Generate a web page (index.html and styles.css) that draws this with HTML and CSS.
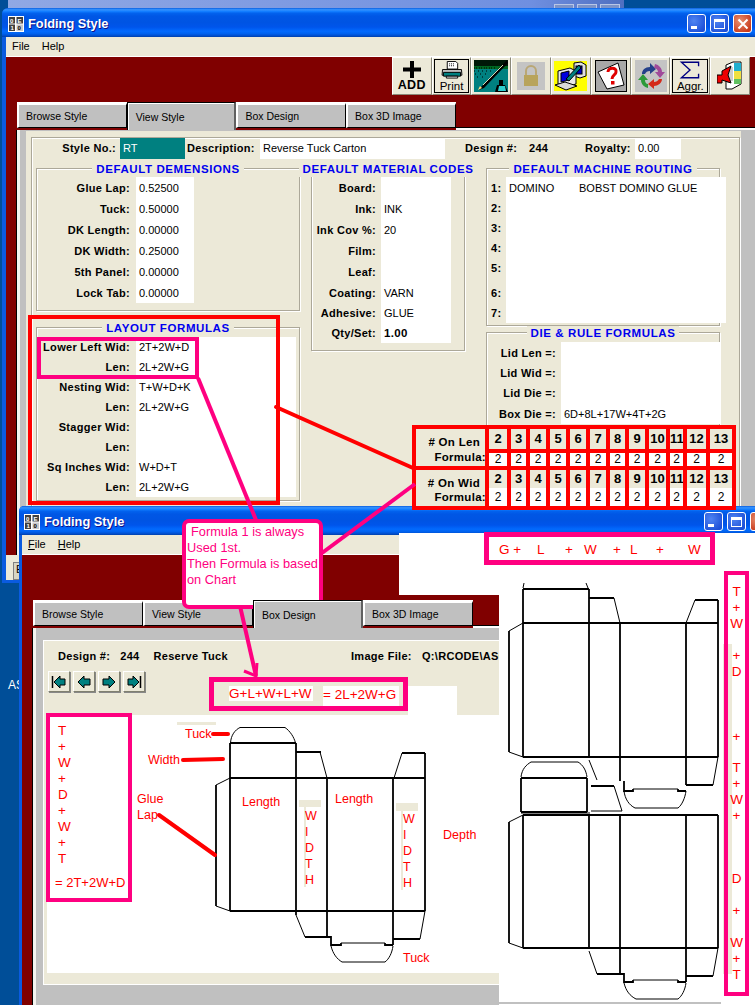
FILE: index.html
```html
<!DOCTYPE html>
<html lang="en">
<head>
<meta charset="utf-8">
<title>Folding Style</title>
<link rel="stylesheet" href="styles.css">
</head>
<body>
<div class="desktop">
  <div class="behind-bar"><i class="ghost"></i><i class="ghost"></i><i class="ghost"></i></div>
  <span class="desk-label">AS</span>

  <section class="win win1">
    <header class="titlebar">
      <svg class="appicon" viewBox="0 0 16 16"><rect width="16" height="16" fill="#fff"/><rect x="1" y="1" width="6" height="6.5" fill="#404040"/><rect x="8.5" y="1" width="6.5" height="6.5" fill="#404040"/><rect x="1" y="8.5" width="6" height="6.5" fill="#404040"/><rect x="8.5" y="8.5" width="6.5" height="6.5" fill="#c8c8c8"/><text x="2" y="6.6" class="ai">0</text><text x="9.6" y="6.6" class="ai">E</text><text x="2.4" y="14" class="ai">1</text><text x="9.6" y="14" class="ai dk">0</text></svg>
      <span class="wintitle">Folding Style</span>
      <div class="controls">
        <span class="ctl"><i class="g-min"></i></span><span class="ctl"><i class="g-max"></i></span><span class="ctl close"><svg viewBox="0 0 12 12" width="12" height="12"><path d="M1.5 1.5L10.5 10.5M10.5 1.5L1.5 10.5" stroke="#fff" stroke-width="2"/></svg></span>
      </div>
    </header>
    <nav class="menu"><span>File</span><span>Help</span></nav>
    <div class="client">
      <div class="toolbar">
        <button class="tb tb-add"><svg width="20" height="17" viewBox="0 0 20 17"><path d="M8 0h4v6.5h7v4h-7V17H8v-6.5H1v-4h7z" fill="#000"/></svg><b>ADD</b></button>
        <button class="tb tb-framed"><svg width="22" height="19" viewBox="0 0 22 19"><path d="M6 .5h9l2 2v6H6z" fill="#fff" stroke="#000"/><path d="M8 3h1M10 3h1M8 5h1M10 5h1M12 3h1M12 5h1" stroke="#000"/><path d="M1 9h20l.5 6H.5z" fill="#c0c0c0" stroke="#000"/><path d="M2 12h18v4H2z" fill="#008080" stroke="#000"/><path d="M5 16h12v2H5z" fill="#fff" stroke="#000"/></svg><span>Print</span></button>
        <button class="tb"><svg width="34" height="32" viewBox="0 0 34 32"><rect width="34" height="32" fill="#008080"/><path d="M0 0h34v9H0z" fill="#062"/><path d="M0 0h34v6H0z" fill="#000" opacity=".75"/><path d="M0 8h3M5 8h3M10 8h3M15 8h3M20 8h2M0 11h2M4 11h2M8 11h2M12 11h2M16 11h2M1 14h2M6 14h2M11 14h2M3 17h2M8 17h1" stroke="#000" stroke-dasharray="1 1"/><path d="M33 0L8 26l-3 4 5-2L34 3z" fill="#000"/><path d="M29 5L9 25" stroke="#d8d8b8"/><path d="M6 26l-2 4 4-2z" fill="#ffe080"/><path d="M21 32l2-7h2v-5h4v5h2l3 7z" fill="#000"/><path d="M24 31l1-5h6l1 5z" fill="#30d0d0"/></svg></button>
        <button class="tb"><svg width="28" height="28" viewBox="0 0 28 28"><rect width="28" height="28" fill="#c4c4c4"/><path d="M9 13V9a5 5 0 0 1 10 0v4" fill="none" stroke="#b9a775" stroke-width="2"/><rect x="7" y="13" width="14" height="11" fill="#b8a45c"/></svg></button>
        <button class="tb"><svg width="33" height="30" viewBox="0 0 33 30"><rect width="33" height="30" fill="#ffff00"/><path d="M20 2l7-1 5 3v11l-6 2-6-2z" fill="#e0e0e0" stroke="#000"/><rect x="22" y="5" width="6" height="8" fill="#0000c0" stroke="#000"/><path d="M4 10l12-3 6 3v13l-11 3-7-3z" fill="#e8e8e8" stroke="#000"/><path d="M7 12l8-2v9l-8 2z" fill="#0000e0" stroke="#000"/><path d="M1 24l10-3 12 4-11 4z" fill="#d8d8d8" stroke="#000"/><path d="M12 18L25 4l2 3-12 13z" fill="#008080" stroke="#000"/></svg></button>
        <button class="tb tb-framed-gray"><svg width="30" height="30" viewBox="0 0 30 30"><rect width="30" height="30" fill="#a8a8a8"/><path d="M2 11L22 2l6 22-17 4z" fill="#fff" stroke="#000"/><path d="M12 11c0-5 9-5 8 0 0 3-4 3-4 7" fill="none" stroke="#e00000" stroke-width="3"/><rect x="15" y="20" width="3.5" height="3.5" fill="#e00000"/></svg></button>
        <button class="tb"><svg width="32" height="32" viewBox="0 0 32 32"><rect width="32" height="32" fill="#c4c4c4"/><path d="M7 14c0-4 3-7 8-7V3l6 6-6 5v-3c-3 0-4 1-5 3z" fill="#25408a"/><path d="M20 4c4 1 7 4 7 8h3l-5 6-5-6h3c0-2-2-4-4-4z" fill="#a04a9a"/><path d="M27 19c0 4-4 7-8 7v3l-6-5 6-5v3c2 0 4-1 5-3z" fill="#d42a1a"/><path d="M13 28c-4-1-7-4-7-8H3l5-6 5 6h-3c0 2 1 4 3 4z" fill="#2e9a3a"/></svg></button>
        <button class="tb tb-framed"><svg width="26" height="21" viewBox="0 0 26 21"><path d="M23 6V1.500H3l10 9-10 9h20V15" fill="none" stroke="#000080" stroke-width="1.600"/></svg><span class="sm">Aggr.</span></button>
        <button class="tb"><svg width="26" height="30" viewBox="0 0 26 30"><path d="M9 4l7-3h8v22l-9 5H9z" fill="#fff" stroke="#000"/><path d="M17 2h7v8h-7z" fill="#20b0d0"/><path d="M17 10h7v8h-7z" fill="#f0e040"/><path d="M17 18h7v5h-7z" fill="#60c060"/><path d="M11 8v14M13 7v14M15 6v14" stroke="#999"/><path d="M0 14h5v-4l9-5-3 9 3 8-9-3v3H0z" fill="#ee0000" stroke="#000"/></svg></button>
      </div>
      <div class="tabs">
        <span class="tab">Browse Style</span><span class="tab active">View Style</span><span class="tab">Box Design</span><span class="tab">Box 3D Image</span><span class="tabline"></span>
      </div>
      <div class="page">
        <div class="sheet">
          <div class="frame">
            <div class="head-row">
              <b class="h-lbl1">Style No.:</b>
              <span class="h-teal">RT</span>
              <b class="h-lbl2">Description:</b>
              <span class="h-desc">Reverse Tuck Carton</span>
              <b class="h-lbl3">Design #:</b>
              <b class="h-num">244</b>
              <b class="h-lbl4">Royalty:</b>
              <span class="h-roy">0.00</span>
            </div>
            <div class="form-grid">
              <div class="col">
                <div class="group g-dims">
                  <h3 class="gtitle"><span>DEFAULT DEMENSIONS</span></h3>
                  <div class="row r21"><b>Glue Lap:</b><span>0.52500</span></div>
                  <div class="row r21"><b>Tuck:</b><span>0.50000</span></div>
                  <div class="row r21"><b>DK Length:</b><span>0.00000</span></div>
                  <div class="row r21"><b>DK Width:</b><span>0.25000</span></div>
                  <div class="row r21"><b>5th Panel:</b><span>0.00000</span></div>
                  <div class="row r21"><b>Lock Tab:</b><span>0.00000</span></div>
                </div>
                <div class="group g-layout">
                  <h3 class="gtitle"><span>LAYOUT FORMULAS</span></h3>
                  <div class="row r20"><b>Lower Left Wid:</b><span>2T+2W+D</span></div>
                  <div class="row r20"><b>Len:</b><span>2L+2W+G</span></div>
                  <div class="row r20"><b>Nesting Wid:</b><span>T+W+D+K</span></div>
                  <div class="row r20"><b>Len:</b><span>2L+2W+G</span></div>
                  <div class="row r20"><b>Stagger Wid:</b><span></span></div>
                  <div class="row r20"><b>Len:</b><span></span></div>
                  <div class="row r20"><b>Sq Inches Wid:</b><span>W+D+T</span></div>
                  <div class="row r20"><b>Len:</b><span>2L+2W+G</span></div>
                </div>
              </div>
              <div class="col">
                <div class="group g-mat">
                  <h3 class="gtitle"><span>DEFAULT MATERIAL CODES</span></h3>
                  <div class="row r21"><b>Board:</b><span></span></div>
                  <div class="row r21"><b>Ink:</b><span>INK</span></div>
                  <div class="row r21"><b>Ink Cov %:</b><span>20</span></div>
                  <div class="row r21"><b>Film:</b><span></span></div>
                  <div class="row r21"><b>Leaf:</b><span></span></div>
                  <div class="row r21"><b>Coating:</b><span>VARN</span></div>
                  <div class="row r20"><b>Adhesive:</b><span>GLUE</span></div>
                  <div class="row r20"><b>Qty/Set:</b><span class="strong">1.00</span></div>
                </div>
              </div>
              <div class="col">
                <div class="group g-route">
                  <h3 class="gtitle"><span>DEFAULT MACHINE ROUTING</span></h3>
                  <div class="row r21"><b>1:</b><span><em class="code">DOMINO</em>BOBST DOMINO GLUE</span></div>
                  <div class="row r20"><b>2:</b><span></span></div>
                  <div class="row r20"><b>3:</b><span></span></div>
                  <div class="row r20"><b>4:</b><span></span></div>
                  <div class="row r20"><b>5:</b><span></span></div>
                  <div class="row r25"><b>6:</b><span></span></div>
                  <div class="row r20"><b>7:</b><span></span></div>
                </div>
                <div class="group g-die">
                  <h3 class="gtitle"><span>DIE &amp; RULE FORMULAS</span></h3>
                  <div class="row r21"><b>Lid Len =:</b><span></span></div>
                  <div class="row r20"><b>Lid Wid =:</b><span></span></div>
                  <div class="row r20"><b>Lid Die =:</b><span></span></div>
                  <div class="row r21"><b>Box Die =:</b><span>6D+8L+17W+4T+2G</span></div>
                </div>
              </div>
            </div>
          </div>
        </div>
      </div>
    </div>
    <footer class="status"><span class="status-btn">E</span></footer>
  </section>

  <section class="win win2">
    <header class="titlebar">
      <svg class="appicon" viewBox="0 0 16 16"><rect width="16" height="16" fill="#fff"/><rect x="1" y="1" width="6" height="6.5" fill="#404040"/><rect x="8.5" y="1" width="6.5" height="6.5" fill="#404040"/><rect x="1" y="8.5" width="6" height="6.5" fill="#404040"/><rect x="8.5" y="8.5" width="6.5" height="6.5" fill="#c8c8c8"/><text x="2" y="6.6" class="ai">0</text><text x="9.6" y="6.6" class="ai">E</text><text x="2.4" y="14" class="ai">1</text><text x="9.6" y="14" class="ai dk">0</text></svg>
      <span class="wintitle">Folding Style</span>
      <div class="controls">
        <span class="ctl"><i class="g-min"></i></span><span class="ctl"><i class="g-max"></i></span><span class="ctl close"></span>
      </div>
    </header>
    <nav class="menu"><span><u>F</u>ile</span><span><u>H</u>elp</span></nav>
    <div class="client">
      <div class="tabs">
        <span class="tab">Browse Style</span><span class="tab">View Style</span><span class="tab active">Box Design</span><span class="tab">Box 3D Image</span><span class="tabline"></span>
      </div>
      <div class="page">
        <div class="sheet sheet2">
          <div class="design-row">
            <b class="d-lbl">Design #:</b><b class="d-num">244</b><b class="d-name">Reserve Tuck</b><b class="d-img">Image File:</b><b class="d-path">Q:\RCODE\ASCOM\BOX</b>
          </div>
          <div class="navs">
            <button class="nav"><svg width="16" height="14" viewBox="0 0 16 14"><path d="M1.5 1v12" stroke="#000" stroke-width="1.5"/><path d="M3 7l6-6v3h5v6H9v3z" fill="#008080" stroke="#000"/></svg></button>
            <button class="nav"><svg width="16" height="14" viewBox="0 0 16 14"><path d="M2 7l6-6v3h6v6H8v3z" fill="#008080" stroke="#000"/></svg></button>
            <button class="nav"><svg width="16" height="14" viewBox="0 0 16 14"><path d="M14 7L8 1v3H2v6h6v3z" fill="#008080" stroke="#000"/></svg></button>
            <button class="nav"><svg width="16" height="14" viewBox="0 0 16 14"><path d="M14.5 1v12" stroke="#000" stroke-width="1.5"/><path d="M13 7L7 1v3H2v6h5v3z" fill="#008080" stroke="#000"/></svg></button>
          </div>
          <div class="white-area"></div>
        </div>
      </div>
    </div>
  </section>

  <div class="paste paste-a"></div>
  <div class="paste paste-b"></div>
  <div class="paste paste-c"></div>
  <div class="paste-line"></div>

  <!-- the # On chart pasted over the first window -->
  <div class="chart">
    <div class="chart-row first">
      <div class="chart-label"><b># On Len</b><b class="f">Formula:</b></div>
      <div class="cc w22"><b>2</b><span>2</span></div>
      <div class="cc w19"><b>3</b><span>2</span></div>
      <div class="cc w20"><b>4</b><span>2</span></div>
      <div class="cc w20"><b>5</b><span>2</span></div>
      <div class="cc w20 up"><b>6</b><span>2</span></div>
      <div class="cc w20"><b>7</b><span>2</span></div>
      <div class="cc w19"><b>8</b><span>2</span></div>
      <div class="cc w20"><b>9</b><span>2</span></div>
      <div class="cc w21"><b>10</b><span>2</span></div>
      <div class="cc w17"><b>11</b><span>2</span></div>
      <div class="cc w23 up"><b>12</b><span>2</span></div>
      <div class="cc w26"><b>13</b><span>2</span></div>
    </div>
    <div class="chart-row second">
      <div class="chart-label"><b># On Wid</b><b class="f">Formula:</b></div>
      <div class="cc w22"><b>2</b><span>2</span></div>
      <div class="cc w19"><b>3</b><span>2</span></div>
      <div class="cc w20"><b>4</b><span>2</span></div>
      <div class="cc w20 down"><b>5</b><span>2</span></div>
      <div class="cc w20"><b>6</b><span>2</span></div>
      <div class="cc w20"><b>7</b><span>2</span></div>
      <div class="cc w19"><b>8</b><span>2</span></div>
      <div class="cc w20"><b>9</b><span>2</span></div>
      <div class="cc w21 down"><b>10</b><span>2</span></div>
      <div class="cc w17"><b>11</b><span>2</span></div>
      <div class="cc w23"><b>12</b><span>2</span></div>
      <div class="cc w26"><b>13</b><span>2</span></div>
    </div>
  </div>

  <!-- box drawings -->
  <svg class="drawings" width="755" height="1005" viewBox="0 0 755 1005">
    <g class="beige">
      <rect x="177" y="722" width="39" height="3"/><rect x="299" y="800" width="22" height="7"/><rect x="304" y="807" width="2" height="80"/><rect x="396" y="803" width="22" height="8"/><rect x="401" y="811" width="2" height="79"/><rect x="723" y="644" width="9" height="330"/>
    </g>
    <g class="thin">
      <path d="M230.5 743C231 735 235 730 240 727.5H285C290 731 294 737 295.5 743"/>
      <path d="M230 778L216 785M216 906L230 911M320 752L327 778M394 778L402 753M296 915L305 937M425 911L420 939M341 943H385"/>
      <path d="M331 946C333 954 337 959 342 962H385C389 959 392 953 393 946"/>
      <path d="M523 623L509 631M509 752L523 757M614 598L620 623M686 623L695 600M589 760L597 780M718 757L713 785M633 789H678M523 588L524 583M586 583L588 588"/>
      <path d="M624 791C625 799 629 805 635 808H678C682 805 685 798 686 791"/>
      <path d="M521 777C522 769 526 765 531 762H578C583 765 586 770 587 777M521 813H590M614 786L622 811M591 811H622"/>
      <path d="M523 815L509 822M509 943L523 948M589 951L597 974M718 948L713 976M633 980H678"/>
      <path d="M624 983C626 991 630 996 636 999H678C682 996 685 990 686 983"/>
    </g>
    <g class="thick">
      <path d="M230 743H296M230 778H425M230 911H425M230 743V911M296 743V911M327 778V937M393 778V945M425 753V911M296 752H321M402 753H425M216 785V906"/>
      <path d="M296 911V915M305 937H331V945H341V943M393 939H420M385 943V945H393"/>
      <path d="M523 589H589M523 623H718M523 757H718M523 589V757M589 589V757M620 623V781M686 623V785M718 600V757M589 598H614M695 600H718M509 631V752M686 785H713M624 781V791H633V789M678 789V791H686"/>
      <path d="M521 778H587M521 812H587M521 778V812M587 778V812M591 786H614"/>
      <path d="M523 815H718M523 948H718M523 815V948M589 815V948M620 815V974M686 815V982M718 815V948M509 822V943M597 974H620V974H624V982H633V980M678 980V982H686M686 976H713"/>
    </g>
  </svg>

  <!-- red labels on the first drawing -->
  <span class="lab l-tuck">Tuck</span>
  <span class="lab l-width">Width</span>
  <span class="lab l-glue">Glue<br>Lap</span>
  <span class="lab l-len1">Length</span>
  <span class="lab l-len2">Length</span>
  <span class="lab l-w1">W<br>I<br>D<br>T<br>H</span>
  <span class="lab l-w2">W<br>I<br>D<br>T<br>H</span>
  <span class="lab l-depth">Depth</span>
  <span class="lab l-tuck2">Tuck</span>

  <!-- pink annotation boxes -->
  <div class="frame-red"></div>
  <div class="frame-pink"></div>

  <div class="anno anno-top">
    <span>G +</span><span class="p2">L</span><span class="p3">+</span><span class="p4">W</span><span class="p5">+</span><span class="p6">L</span><span class="p7">+</span><span class="p8">W</span>
  </div>

  <div class="anno anno-formula"><span class="af1">G+L+W+L+W</span><span class="af2">= 2L+2W+G</span></div>

  <div class="anno anno-left">
    <span>T</span><span>+</span><span>W</span><span>+</span><span>D</span><span>+</span><span>W</span><span>+</span><span>T</span>
    <span class="total">= 2T+2W+D</span>
  </div>

  <div class="anno anno-right">
    <span class="s16">T</span><span class="s16">+</span><span class="s32">W</span><span class="s16">+</span><span class="s65">D</span><span class="s31">+</span><span class="s16">T</span><span class="s16">+</span><span class="s16">W</span><span class="s63">+</span><span class="s32">D</span><span class="s32">+</span><span class="s16">W</span><span class="s16">+</span><span class="s16">T</span>
  </div>

  <svg class="connectors" width="755" height="1005" viewBox="0 0 755 1005">
    <path class="c-red" d="M276 407L413 468"/>
    <path class="c-pink" d="M198 378L256 520"/>
    <path class="c-pink" d="M322 553L415 484"/>
    <path class="c-pink" d="M240 606L256 676"/>
    <path class="c-pink2" d="M244 671L256 676L257 663"/>
    <path class="c-red" d="M215 855L159 815"/>
    <path class="c-red" d="M213 734H228"/>
    <path class="c-red" d="M183 760L223 759"/>
  </svg>

  <aside class="callout">
    <p class="in">Formula 1 is always</p>
    <p>Used 1st.</p>
    <p>Then Formula is based</p>
    <p>on Chart</p>
  </aside>
</div>
</body>
</html>
```
FILE: styles.css
```css
* { box-sizing: border-box; }
html, body { margin: 0; padding: 0; }
body { width: 755px; height: 1005px; overflow: hidden; font-family: "Liberation Sans", Arial, sans-serif; font-size: 11px; color: #000; }
b { font-weight: 700; letter-spacing: .3px; }
p, h3 { margin: 0; }

.desktop { position: relative; width: 755px; height: 1005px; overflow: hidden; background: #004e98; }
.behind-bar { position: absolute; left: 8px; top: 0; width: 616px; height: 8px; display: flex; gap: 3px; justify-content: flex-end; padding: 4px 4px 0 0; background: linear-gradient(90deg, #90a8e4, #6f8fe0 85%, #4f6fc0); }
.ghost { display: block; width: 20px; height: 4px; background: #7c93c8; border: 1px solid #b8c6e6; border-bottom: 0; }
.desk-label { position: absolute; left: 8px; top: 678px; color: #fff; font-size: 12px; }

/* windows */
.win { position: absolute; display: flex; flex-direction: column; overflow: hidden; background: #0a5be0; }
.win1 { left: 2px; top: 8px; width: 753px; height: 575px; padding: 0 0 3px 4px; border-radius: 6px 0 0 0; }
.win2 { left: 19px; top: 506px; width: 736px; height: 499px; padding-left: 3px; border-radius: 5px 0 0 0; }

.titlebar { flex: none; display: flex; align-items: center; height: 29px; margin-left: -4px; padding: 2px 3px 0 6px; color: #fff;
  background: linear-gradient(#0a5fe0 0, #3593ff 6%, #127dff 12%, #0262ee 18%, #0057e5 28%, #0054e3 50%, #0055eb 66%, #026afe 80%, #0062ef 88%, #0052d6 94%, #0040ab 100%); }
.win2 .titlebar { height: 29px; margin-left: -3px; padding-left: 5px; }
.appicon { width: 16px; height: 16px; flex: none; }
.ai { font: 700 6px "Liberation Sans", sans-serif; fill: #fff; }
.ai.dk { fill: #000; }
.wintitle { margin-left: 4px; font-size: 12.8px; font-weight: 700; text-shadow: 1px 1px 0 #0f1089; }
.controls { margin-left: auto; display: flex; gap: 4px; }
.ctl { position: relative; display: flex; align-items: center; justify-content: center; width: 19px; height: 19px; border: 1px solid #fff; border-radius: 3px; background: radial-gradient(circle at 35% 35%, #4f84f2, #1e50d8 80%); }
.ctl.close { background: radial-gradient(circle at 35% 35%, #e89070, #c8391c 80%); }
.g-min { display: block; width: 6px; height: 3px; margin: 8px 6px 0 0; background: #fff; }
.g-max { display: block; width: 11px; height: 10px; border: 1px solid #fff; border-top-width: 3px; }
.win2 .controls { margin-right: -17px; }

.menu { flex: none; display: flex; gap: 12px; height: 20px; padding: 1px 0 0 6px; background: #ece9d8; border-bottom: 1px solid #fff; line-height: 17px; }
.win2 .menu { height: 20px; padding-left: 6px; }

.client { flex: 1; min-height: 0; display: flex; flex-direction: column; background: #800000; }

/* toolbar */
.toolbar { flex: none; display: flex; justify-content: flex-end; height: 38px; padding-right: 5px; }
.tb { display: flex; flex-direction: column; align-items: center; justify-content: center; width: 39.8px; height: 38px; padding: 0; font: 11.5px/11px "Liberation Sans", sans-serif; background: #ece9d8; border: 1px solid; border-color: #fff #8a8878 #8a8878 #fff; }
.tb b { font-size: 12.5px; line-height: 13px; margin-top: 1px; }
.tb span { line-height: 12px; margin-top: 1px; }
.tb-framed { box-shadow: inset 0 0 0 1px #ece9d8, inset 0 0 0 2px #000; padding: 3px 0 2px; }
.tb-framed-gray svg { outline: 1.5px solid #000; }
.sm { font-size: 11.5px; }

/* tabs */
.tabs { flex: none; display: flex; height: 28px; margin: 7px 0 0 11px; font-size: 10.5px; }
.tab { display: flex; align-items: center; flex: none; width: 109.7px; height: 25px; margin-top: 1px; padding-left: 7px; background: #c0c0c0; border: 1px solid; border-color: #fff #000 #000 #fff; border-width: 2px 1.5px 1px 2px; box-shadow: 0 -1px 0 #fff; }
.tab.active { position: relative; height: 28px; margin-top: 0; z-index: 1; border-color: #000 #606060 #c0c0c0 #000; border-width: 1px 2px 0 1px; box-shadow: inset 1px 1px 0 #fff; padding-left: 8px; }
.tabline { flex: 1; margin-top: 25px; border-top: 1px solid #000; border-bottom: 2px solid #fff; }
.page { flex: 1; min-height: 0; margin-left: 11px; padding: 1px 14px 0 6px; background: #c0c0c0; border-left: 3px solid #f4f4f0; box-shadow: -1px 0 0 #000; }

/* first window form */
.sheet { height: 100%; padding: 6px 1px 0 5px; background: #ece9d8; overflow: hidden; }
.frame { height: 420px; border: 1px solid #aca899; box-shadow: inset 1px 1px 0 #fff, 1px 1px 0 #fff; padding: 0 0 0 4px; }
.head-row { display: flex; align-items: center; height: 21px; margin-left: -5px; line-height: 21px; }
.h-lbl1 { width: 85px; text-align: right; }
.h-teal { width: 65px; height: 21px; margin-left: 4px; padding-left: 3px; background: #008080; color: #fff; }
.h-lbl2 { width: 70px; margin-left: 2px; white-space: nowrap; }
.h-desc { width: 185px; height: 21px; margin-left: 3px; padding-left: 3px; background: #fff; }
.h-lbl3 { width: 56px; margin-left: 20px; white-space: nowrap; }
.h-num { width: 22px; margin-left: 8px; }
.h-lbl4 { width: 47px; margin-left: 34px; white-space: nowrap; }
.h-roy { width: 46px; height: 21px; margin-left: 3px; padding-left: 3px; background: #fff; }

.form-grid { display: grid; grid-template-columns: 264px 154px 244px; column-gap: 11px; margin-top: 9px; }
.form-grid .col:last-child { margin-left: 10px; }
.col { display: flex; flex-direction: column; align-items: stretch; }
.group { position: relative; border: 1px solid #aca899; box-shadow: inset 1px 1px 0 #fff, 1px 1px 0 #fff; padding-top: 8px; }
.gtitle { position: absolute; left: 0; right: 0; top: -7px; display: flex; justify-content: center; font-size: 11.5px; font-weight: 700; letter-spacing: .6px; color: #0000ee; line-height: 14px; white-space: nowrap; pointer-events: none; }
.gtitle span { flex: none; padding: 0 4px; background: #ece9d8; }
.g-dims { height: 143px; }
.g-layout { height: 174px; margin-top: 16px; padding-top: 9px; }
.g-mat { height: 183px; }
.g-mat .gtitle span { padding-bottom: 1px; }
.g-route { height: 158px; }
.g-die { height: 120px; margin-top: 6px; padding-top: 9px; }

.row { display: flex; }
.row b, .row span { display: flex; align-items: center; white-space: nowrap; }
.row b { justify-content: flex-end; padding-right: 6px; flex: none; }
.row span { flex: none; padding-left: 3px; background: #fff; }
.r21 { height: 21px; }
.r20 { height: 20px; }
.r25 { height: 25px; }
.g-dims .row b { width: 99px; }
.g-dims .row span { width: 58px; }
.g-layout .row b { width: 99px; }
.g-layout .row span { width: 160px; }
.g-mat .row b { width: 69px; padding-right: 5px; }
.g-mat .row span { width: 70px; }
.g-route .row b { width: 19px; justify-content: flex-start; padding: 0 0 0 4px; }
.g-route .row span { width: 220px; }
.g-route .r25 b, .g-route .r25 span { padding-top: 5px; }
.g-die .row b { width: 74px; padding-right: 5px; }
.g-die .row span { width: 160px; }
.code { font-style: normal; width: 70px; flex: none; }
.g-mat .row .strong { font-weight: 700; letter-spacing: .3px; font-size: 11.5px; }

.status { flex: none; height: 25px; padding: 4px 0 0 7px; background: #ece9d8; border-top: 3px solid #ece9d8; }
.status-btn { display: block; width: 12px; height: 18px; padding-left: 2px; background: #d8d5c4; border: 1px solid #808080; font-size: 11px; }

/* second window */
.win2 .tabs { margin-top: 45px; }
.win2 .tab { width: 110px; }
.win2 .page { padding-top: 12px; padding-right: 0; padding-left: 7px; border-left-width: 3px; margin-bottom: 0; }
.sheet2 { position: relative; height: 345px; padding: 0; border-top: 1px solid #fff; border-left: 1px solid #fff; border-bottom: 1px solid #fff; }
.design-row { display: flex; align-items: center; height: 15px; margin-top: 7px; padding-left: 14px; white-space: nowrap; }
.d-num { margin-left: 10px; }
.d-name { margin-left: 14px; }
.d-img { position: absolute; left: 307px; }
.d-path { position: absolute; left: 378px; }
.navs { display: flex; gap: 3px; margin: 8px 0 0 4px; }
.nav { display: flex; align-items: center; justify-content: center; width: 22px; height: 21px; padding: 0; background: #ece9d8; border: 1px solid; border-color: #fff #808070 #808070 #fff; box-shadow: 1px 1px 0 #888; }
.white-area { height: 258px; margin: 23px 0 0 3px; background: #fff; }

/* pasted pieces */
.paste { position: absolute; background: #fff; }
.paste-a { left: 399px; top: 533px; width: 356px; height: 62px; }
.paste-b { left: 499px; top: 595px; width: 256px; height: 410px; }
.paste-c { left: 408px; top: 686px; width: 49px; height: 30px; }
.paste-line { position: absolute; left: 499px; top: 1002px; width: 222px; height: 2px; background: #c0c0c0; }

/* chart */
.chart { position: absolute; left: 412px; top: 425px; width: 324px; height: 85px; border: 4px solid #f00; background: #ece9d8; }
.chart-row { display: flex; }
.chart-row.first { height: 41px; border-bottom: 4px solid #f00; }
.chart-row.second { height: 36px; }
.chart-label { flex: none; width: 69px; display: flex; flex-direction: column; align-items: flex-end; font-size: 11.5px; line-height: 15px; padding-top: 6px; overflow: visible; }
.chart-label b { padding-right: 5px; }
.chart-label .f { padding-right: 0; margin-right: -1px; }
.second .chart-label { padding-top: 6px; line-height: 14px; }
.cc { position: relative; flex: none; display: flex; flex-direction: column; border-left: 4px solid #f00; text-align: center; }
.cc b { display: block; font-size: 13px; letter-spacing: 0; }
.cc span { display: block; background: #fff; font-size: 12px; }
.first .cc b { height: 24px; line-height: 19px; border-bottom: 4px solid #f00; }
.first .cc span { flex: 1; line-height: 13px; }
.second .cc b { height: 18px; line-height: 17px; }
.second .cc span { flex: 1; line-height: 18px; }
.w17 { width: 17px; } .w19 { width: 19px; } .w20 { width: 20px; } .w21 { width: 21px; } .w22 { width: 22px; } .w23 { width: 23px; } .w26 { width: 26px; }
.up { box-shadow: 0 -7px 0 -4px #f00; }
.down { box-shadow: 0 6px 0 -4px #f00; }

/* drawings */
.drawings, .connectors { position: absolute; left: 0; top: 0; pointer-events: none; }
.beige rect { fill: #ece9d8; }
.thin path { fill: none; stroke: #000; stroke-width: 1; }
.thick path { fill: none; stroke: #000; stroke-width: 1.8; stroke-linejoin: miter; }
.c-red { fill: none; stroke: #f00; stroke-width: 4; stroke-linecap: round; }
.c-pink { fill: none; stroke: #ff0080; stroke-width: 4; }
.c-pink2 { fill: none; stroke: #ff0080; stroke-width: 3; }

.lab { position: absolute; color: #f00; font-size: 12.5px; line-height: 16px; white-space: nowrap; }
.l-tuck { left: 185px; top: 726px; }
.l-width { left: 148px; top: 752px; }
.l-glue { left: 137px; top: 791px; }
.l-len1 { left: 242px; top: 794px; }
.l-len2 { left: 335px; top: 791px; }
.l-w1 { left: 305px; top: 808px; }
.l-w2 { left: 403px; top: 811px; }
.l-depth { left: 443px; top: 827px; }
.l-tuck2 { left: 403px; top: 950px; }

.frame-red { position: absolute; left: 28px; top: 315px; width: 252px; height: 190px; border: 4px solid #f00; }
.frame-pink { position: absolute; left: 37px; top: 337px; width: 162px; height: 42px; border: 4px solid #ff0080; }

.anno { position: absolute; color: #f00; font-size: 13.5px; border: 5px solid #ff0080; background: #fff; white-space: nowrap; }
.anno-top { left: 484px; top: 532px; width: 231px; height: 33px; line-height: 23px; background: #fff; }
.anno-top span { position: absolute; top: 1px; }
.anno-top span:first-child { left: 10px; }
.p2 { left: 48px; } .p3 { left: 76px; } .p4 { left: 95px; } .p5 { left: 124px; } .p6 { left: 141px; } .p7 { left: 167px; } .p8 { left: 199px; }

.anno-formula { left: 209px; top: 677px; width: 199px; height: 34px; background: transparent; display: flex; padding: 4px 0 0 15px; line-height: 15px; }
.af1 { display: block; height: 15px; background: #fff; width: 84px; }
.af2 { display: block; margin-left: 10px; line-height: 18px; background: #fff; height: 20px; width: 76px; }

.anno-left { left: 46px; top: 713px; width: 86px; height: 189px; display: flex; flex-direction: column; padding: 6px 0 0 8px; line-height: 16px; border-width: 4px; }
.anno-left .total { margin: 8px 0 0 -3px; font-size: 13px; }

.anno-right { left: 724px; top: 571px; width: 25px; height: 425px; display: flex; flex-direction: column; align-items: center; padding-top: 9px; line-height: 16px; border-width: 4px; background: transparent; }
.anno-right span { flex: none; }
.s16 { height: 16px; } .s31 { height: 31px; } .s32 { height: 32px; } .s63 { height: 63px; } .s65 { height: 65px; }

/* callout */
.callout { position: absolute; left: 182px; top: 519px; width: 141px; height: 90px; padding: 1px 0 0 1px; border: 4px solid #ff0080; border-radius: 7px; background: #fff; color: #ff0080; font-size: 12.8px; line-height: 16px; white-space: nowrap; }
.callout .in { padding-left: 4px; }
```
